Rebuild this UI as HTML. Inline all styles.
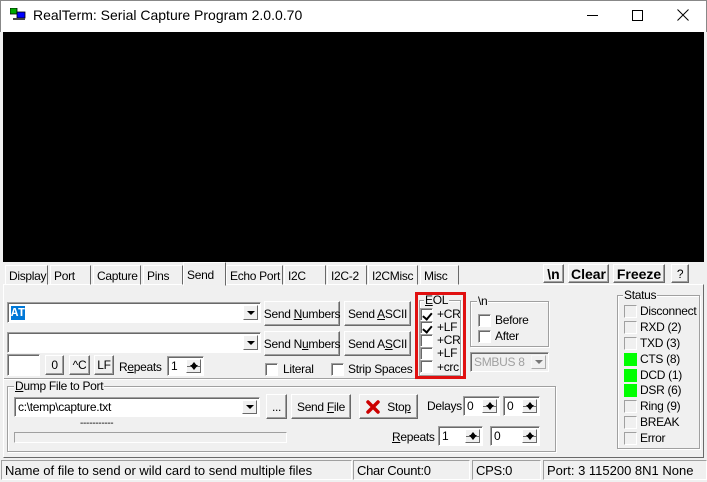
<!DOCTYPE html><html><head><style>
*{box-sizing:border-box;margin:0;padding:0}
body{width:707px;height:482px;background:#f0f0f0;font-family:"Liberation Sans",sans-serif;font-size:12px;color:#000;position:relative;overflow:hidden;letter-spacing:-0.3px}
.a{position:absolute}
.b{position:absolute;background:#f0f0f0;border:1px solid;border-color:#fff #696969 #696969 #fff;box-shadow:inset -1px -1px #a0a0a0;display:flex;align-items:center;justify-content:center;white-space:pre}
.in{position:absolute;background:#fff;border:1px solid;border-color:#a0a0a0 #fff #fff #a0a0a0;box-shadow:inset 1px 1px #696969;padding-left:3px;display:flex;align-items:center;white-space:nowrap}
.dd{position:absolute;right:2px;top:2px;bottom:2px;width:15px;background:#f0f0f0;border:1px solid;border-color:#fff #696969 #696969 #fff;display:flex;align-items:center;justify-content:center}
.dd:after{content:"";border-left:4px solid transparent;border-right:4px solid transparent;border-top:4px solid #000}
.sp{position:absolute;right:2px;top:2px;bottom:2px;width:15px;background:#f0f0f0;border:1px solid;border-color:#fff #696969 #696969 #fff}
.sp:before{content:"";position:absolute;left:3px;top:2px;border-left:4px solid transparent;border-right:4px solid transparent;border-bottom:5px solid #000}
.sp:after{content:"";position:absolute;left:3px;bottom:2px;border-left:4px solid transparent;border-right:4px solid transparent;border-top:5px solid #000}
.sp i{position:absolute;left:0;right:0;top:50%;height:1px;background:#696969}
.cb{position:absolute;width:13px;height:13px;background:#fff;border:1px solid;border-color:#a0a0a0 #fff #fff #a0a0a0;box-shadow:inset 1px 1px #696969}
.ck:after{content:"";position:absolute;left:2px;top:2px;width:4px;height:7px;border:solid #000;border-width:0 2px 2px 0;transform:rotate(40deg) translate(1px,-1px)}
.g{position:absolute;border:1px solid #a0a0a0;box-shadow:1px 1px #fff,inset 1px 1px #fff}
.gl{position:absolute;background:#f0f0f0;padding:0 1px;line-height:12px}
.tab{position:absolute;top:265px;height:20px;border:1px solid;border-color:#fff #696969 transparent #fff;padding:3px 0 0 3px}
.led{position:absolute;left:624px;width:13px;height:13px;border:1px solid;border-color:#a0a0a0 #fff #fff #a0a0a0}
.lt{position:absolute;left:640px}
.s{position:absolute;top:460px;height:20px;border:1px solid;border-color:#a0a0a0 #fff #fff #a0a0a0;padding:2px 0 0 3px;font-size:13px;white-space:nowrap}
u{text-decoration:underline}
.bb{font-weight:bold;font-size:14px;letter-spacing:0}
</style></head><body>
<div class="a" style="left:0;top:0;width:707px;height:32px;background:#fff;border:1px solid #888;border-bottom:none"></div>
<svg class="a" style="left:10px;top:8px" width="16" height="14"><rect x="0" y="0" width="7" height="6" fill="#0a0" stroke="#000" stroke-width=".8"/><rect x="7" y="4" width="8" height="6" fill="#00f" stroke="#000" stroke-width=".8"/><rect x="3" y="10" width="12" height="2" fill="#444"/></svg>
<div class="a" style="left:33px;top:7px;font-size:14px;letter-spacing:0;color:#000">RealTerm: Serial Capture Program 2.0.0.70</div>
<div class="a" style="left:587px;top:15px;width:11px;height:1px;background:#000"></div>
<div class="a" style="left:632px;top:10px;width:11px;height:11px;border:1px solid #000"></div>
<svg class="a" style="left:677px;top:9px" width="12" height="12"><path d="M0.5 0.5L11.5 11.5M11.5 0.5L0.5 11.5" stroke="#000" stroke-width="1"/></svg>
<div class="a" style="left:3px;top:32px;width:701px;height:230px;background:#000"></div>
<div class="a" style="left:3px;top:284px;width:701px;height:174px;border:1px solid;border-color:#fff #696969 #696969 #fff"></div>
<div class="tab" style="left:5px;width:43px">Display</div>
<div class="tab" style="left:50px;width:41px">Port</div>
<div class="tab" style="left:93px;width:48px">Capture</div>
<div class="tab" style="left:143px;width:40px">Pins</div>
<div class="tab" style="left:183px;top:262px;height:24px;width:43px;background:#f0f0f0;padding-top:5px">Send</div>
<div class="tab" style="left:226px;width:57px">Echo Port</div>
<div class="tab" style="left:284px;width:42px">I2C</div>
<div class="tab" style="left:327px;width:40px">I2C-2</div>
<div class="tab" style="left:368px;width:50px">I2CMisc</div>
<div class="tab" style="left:420px;width:39px">Misc</div>
<div class="b bb" style="left:543px;top:264px;width:21px;height:19px">\n</div>
<div class="b bb" style="left:568px;top:264px;width:41px;height:19px">Clear</div>
<div class="b bb" style="left:613px;top:264px;width:52px;height:19px">Freeze</div>
<div class="b" style="left:671px;top:264px;width:18px;height:19px">?</div>
<div class="in" style="left:7px;top:302px;width:254px;height:21px"><span style="background:#0078d7;color:#fff;font-weight:bold;font-family:'Liberation Mono',monospace">AT</span><div class="dd"></div></div>
<div class="b" style="left:264px;top:301px;width:76px;height:25px"><span>Send <u>N</u>umbers</span></div>
<div class="b" style="left:344px;top:301px;width:67px;height:25px"><span>Send <u>A</u>SCII</span></div>
<div class="in" style="left:7px;top:332px;width:254px;height:21px"><div class="dd"></div></div>
<div class="b" style="left:264px;top:331px;width:76px;height:25px"><span>Send N<u>u</u>mbers</span></div>
<div class="b" style="left:344px;top:331px;width:67px;height:25px"><span>Send A<u>S</u>CII</span></div>
<div class="in" style="left:7px;top:354px;width:33px;height:22px"></div>
<div class="b" style="left:45px;top:355px;width:19px;height:20px">0</div>
<div class="b" style="left:69px;top:355px;width:21px;height:20px">^C</div>
<div class="b" style="left:94px;top:355px;width:20px;height:20px">LF</div>
<div class="a" style="left:119px;top:360px">R<u>e</u>peats</div>
<div class="in" style="left:167px;top:356px;width:37px;height:20px">1<div class="sp"><i></i></div></div>
<div class="cb" style="left:265px;top:363px"></div><div class="a" style="left:283px;top:362px">Literal</div>
<div class="cb" style="left:331px;top:363px"></div><div class="a" style="left:348px;top:362px">Strip Spaces</div>
<div class="a" style="left:4px;top:378px;width:411px;height:1px;background:#a0a0a0;box-shadow:0 1px #fff"></div>
<div class="g" style="left:419px;top:300px;width:42px;height:76px"></div>
<div class="gl" style="left:424px;top:294px"><u>E</u>OL</div>
<div class="cb ck" style="left:420px;top:308px"></div><div class="a" style="left:437px;top:307px">+CR</div>
<div class="cb ck" style="left:420px;top:321px"></div><div class="a" style="left:437px;top:320px">+LF</div>
<div class="cb" style="left:420px;top:334px"></div><div class="a" style="left:437px;top:333px">+CR</div>
<div class="cb" style="left:420px;top:347px"></div><div class="a" style="left:437px;top:346px">+LF</div>
<div class="cb" style="left:420px;top:360px"></div><div class="a" style="left:437px;top:360px">+crc</div>
<div class="a" style="left:415px;top:292px;width:51px;height:87px;border:3px solid #e01010"></div>
<div class="g" style="left:470px;top:301px;width:79px;height:46px"></div>
<div class="gl" style="left:477px;top:295px">\n</div>
<div class="cb" style="left:478px;top:314px"></div><div class="a" style="left:495px;top:313px">Before</div>
<div class="cb" style="left:478px;top:330px"></div><div class="a" style="left:495px;top:329px">After</div>
<div class="in" style="left:470px;top:352px;width:79px;height:20px;background:#f0f0f0;color:#a0a0a0">SMBUS 8<div class="dd" style="opacity:.5"></div></div>
<div class="g" style="left:7px;top:386px;width:549px;height:66px"></div>
<div class="gl" style="left:14px;top:380px"><u>D</u>ump File to Port</div>
<div class="in" style="left:14px;top:397px;width:246px;height:20px">c:\temp\capture.txt<div class="dd"></div></div>
<div class="b" style="left:266px;top:394px;width:21px;height:25px">...</div>
<div class="b" style="left:291px;top:394px;width:60px;height:25px"><span>Send <u>F</u>ile</span></div>
<div class="b" style="left:359px;top:394px;width:59px;height:25px"><svg width="14" height="14" style="margin-right:7px"><path d="M2 2L12 12M12 2L2 12" stroke="#c00" stroke-width="3.5" stroke-linecap="round"/></svg><span>Sto<u>p</u></span></div>
<div class="a" style="left:427px;top:399px">Delays</div>
<div class="in" style="left:463px;top:396px;width:37px;height:20px">0<div class="sp"><i></i></div></div>
<div class="in" style="left:503px;top:396px;width:37px;height:20px">0<div class="sp"><i></i></div></div>
<div class="a" style="left:80px;top:418px;font-size:10px">-----------</div>
<div class="a" style="left:14px;top:432px;width:273px;height:11px;border:1px solid;border-color:#a0a0a0 #fff #fff #a0a0a0"></div>
<div class="a" style="left:392px;top:430px"><u>R</u>epeats</div>
<div class="in" style="left:438px;top:426px;width:45px;height:20px">1<div class="sp"><i></i></div></div>
<div class="in" style="left:490px;top:426px;width:50px;height:20px">0<div class="sp"><i></i></div></div>
<div class="g" style="left:617px;top:295px;width:83px;height:154px"></div>
<div class="gl" style="left:623px;top:289px">Status</div>
<div class="led" style="top:305px"></div><div class="lt" style="top:304px">Disconnect</div>
<div class="led" style="top:321px"></div><div class="lt" style="top:320px">RXD (2)</div>
<div class="led" style="top:337px"></div><div class="lt" style="top:336px">TXD (3)</div>
<div class="led" style="top:353px;background:#0f0;border-color:#0f0"></div><div class="lt" style="top:352px">CTS (8)</div>
<div class="led" style="top:369px;background:#0f0;border-color:#0f0"></div><div class="lt" style="top:368px">DCD (1)</div>
<div class="led" style="top:384px;background:#0f0;border-color:#0f0"></div><div class="lt" style="top:383px">DSR (6)</div>
<div class="led" style="top:400px"></div><div class="lt" style="top:399px">Ring (9)</div>
<div class="led" style="top:416px"></div><div class="lt" style="top:415px">BREAK</div>
<div class="led" style="top:432px"></div><div class="lt" style="top:431px">Error</div>
<div class="s" style="left:1px;width:351px;letter-spacing:0">Name of file to send or wild card to send multiple files</div>
<div class="s" style="left:353px;width:117px">Char Count:0</div>
<div class="s" style="left:472px;width:69px">CPS:0</div>
<div class="s" style="left:543px;width:164px;letter-spacing:0">Port: 3 115200 8N1 None</div>
</body></html>
